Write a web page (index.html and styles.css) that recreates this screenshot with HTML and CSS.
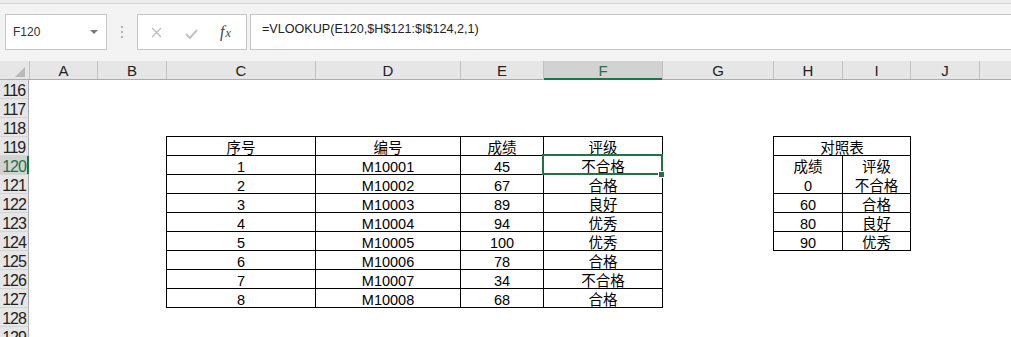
FILE: index.html
```html
<!DOCTYPE html>
<html>
<head>
  <meta charset="utf-8">
  <title>VLOOKUP 评级</title>
  <link rel="stylesheet" href="styles.css">
</head>
<body>
  <div class="topline"></div>

  <div class="formula-bar">
    <div class="name-box"><span>F120</span><span class="drop"></span></div>
    <div class="grip"><i></i><i></i><i></i></div>
    <div class="fx-box">
      <svg class="x-icon" width="11" height="11" viewBox="0 0 11 11"><path d="M1 1L10 10M10 1L1 10" stroke="#bdbdbd" stroke-width="1.3" fill="none"/></svg>
      <svg class="check-icon" width="13" height="10" viewBox="0 0 13 10"><path d="M1 5L5 9L12 1" stroke="#c2c2c2" stroke-width="2" fill="none"/></svg>
      <span class="fx">f<small>x</small></span>
    </div>
    <div class="formula-input">=VLOOKUP(E120,$H$121:$I$124,2,1)</div>
  </div>

  <div class="sheet">
    <div class="row col-head">
      <div class="corner"></div>
      <div>A</div><div>B</div><div>C</div><div>D</div><div>E</div>
      <div class="on">F</div>
      <div>G</div><div>H</div><div>I</div><div>J</div><div></div>
    </div>

    <div class="row first"><div class="rh">116</div></div>
    <div class="row"><div class="rh">117</div></div>
    <div class="row"><div class="rh">118</div></div>

    <div class="row">
      <div class="rh">119</div>
      <div class="c b at-c">序号</div><div class="c b">编号</div><div class="c b">成绩</div><div class="c b br">评级</div>
      <div class="c b br span-hi">对照表</div>
    </div>
    <div class="row">
      <div class="rh on">120</div>
      <div class="c b at-c">1</div><div class="c b">M10001</div><div class="c b">45</div><div class="c b br sel">不合格</div>
      <div class="c b at-h">成绩</div><div class="c b br">评级</div>
    </div>
    <div class="row">
      <div class="rh">121</div>
      <div class="c b at-c">2</div><div class="c b">M10002</div><div class="c b">67</div><div class="c b br">合格</div>
      <div class="c bl at-h">0</div><div class="c bl br">不合格</div>
    </div>
    <div class="row">
      <div class="rh">122</div>
      <div class="c b at-c">3</div><div class="c b">M10003</div><div class="c b">89</div><div class="c b br">良好</div>
      <div class="c b at-h">60</div><div class="c b br">合格</div>
    </div>
    <div class="row">
      <div class="rh">123</div>
      <div class="c b at-c">4</div><div class="c b">M10004</div><div class="c b">94</div><div class="c b br">优秀</div>
      <div class="c b at-h">80</div><div class="c b br">良好</div>
    </div>
    <div class="row">
      <div class="rh">124</div>
      <div class="c b at-c">5</div><div class="c b">M10005</div><div class="c b">100</div><div class="c b br">优秀</div>
      <div class="c b bb at-h">90</div><div class="c b br bb">优秀</div>
    </div>
    <div class="row">
      <div class="rh">125</div>
      <div class="c b at-c">6</div><div class="c b">M10006</div><div class="c b">78</div><div class="c b br">合格</div>
    </div>
    <div class="row">
      <div class="rh">126</div>
      <div class="c b at-c">7</div><div class="c b">M10007</div><div class="c b">34</div><div class="c b br">不合格</div>
    </div>
    <div class="row">
      <div class="rh">127</div>
      <div class="c b bb at-c">8</div><div class="c b bb">M10008</div><div class="c b bb">68</div><div class="c b br bb">合格</div>
    </div>
    <div class="row"><div class="rh">128</div></div>
    <div class="row"><div class="rh">129</div></div>
  </div>
</body>
</html>
```

FILE: styles.css
```css
body {
  margin: 0;
  font-family: "Liberation Sans", "Noto Sans CJK SC", sans-serif;
  background-color: #fff;
  overflow: hidden;
}

/* thin strip above the formula bar */
.topline {
  height: 3px;
  background-color: #ececec;
  border-bottom: 1px solid #d4d4d4;
}

.formula-bar {
  display: flex;
  height: 36px;
  padding: 10px 0 11px 5px;
  background-color: #f3f3f3;
}

.name-box {
  width: 102px;
  box-sizing: border-box;
  border: 1px solid #c6c6c6;
  background-color: #fff;
  display: flex;
  align-items: center;
  justify-content: space-between;
  padding: 0 8px 0 7px;
  font-size: 12px;
  line-height: 14px;
  color: #333;
}
.drop {
  width: 0;
  height: 0;
  border-left: 4px solid transparent;
  border-right: 4px solid transparent;
  border-top: 4px solid #7a7a7a;
}

.grip {
  display: flex;
  flex-direction: column;
  justify-content: center;
  gap: 3px;
  margin: 0 14px;
}
.grip i {
  display: block;
  width: 2px;
  height: 2px;
  background-color: #b3b3b3;
}

.fx-box {
  width: 110px;
  box-sizing: border-box;
  border: 1px solid #c6c6c6;
  background-color: #fff;
  display: flex;
  align-items: center;
  padding-left: 13px;
}
.check-icon {
  margin-left: 23px;
  margin-top: 3px;
}
.fx {
  margin-left: 22px;
  font-family: "Liberation Serif", serif;
  font-style: italic;
  font-size: 16px;
  color: #444;
}
.fx small {
  font-size: 12px;
  margin-left: 1px;
}

.formula-input {
  flex: 1;
  margin-left: 3px;
  margin-right: -2px;
  border: 1px solid #c6c6c6;
  background-color: #fff;
  padding: 6px 0 0 11px;
  font-size: 12.6px;
  line-height: 16px;
  color: #222;
}

/* grid */
.row {
  display: grid;
  grid-template-columns: 29px 68px 69px 149px 145px 83px 119px 111px 69px 68px 69px 32px;
  grid-template-rows: 19px;
}
.row.first {
  grid-template-rows: 18px;
}

.col-head {
  grid-template-rows: 18px;
  background-color: #e6e6e6;
  border-bottom: 1px solid #ababab;
}
.col-head div {
  border-left: 1px solid #c2c2c2;
  text-align: center;
  font-size: 15px;
  line-height: 16px;
  padding-top: 2px;
  color: #222;
}
.col-head .corner {
  border-left: none;
  position: relative;
}
.col-head .corner::after {
  content: "";
  position: absolute;
  right: 4px;
  bottom: 2px;
  border-left: 10px solid transparent;
  border-bottom: 10px solid #b8b8b8;
}
.col-head .on {
  background-color: #d2d2d2;
  color: #217346;
  margin-bottom: -1px;
  box-shadow: inset 0 -2px 0 #217346;
}

.rh {
  background-color: #e6e6e6;
  border-right: 1px solid #ababab;
  border-top: 1px solid #d4d4d4;
  text-align: center;
  font-size: 16px;
  line-height: 16px;
  letter-spacing: -1px;
  padding-top: 3px;
  color: #222;
}
.first .rh {
  border-top: none;
}
.rh.on {
  background-color: #d2d2d2;
  color: #217346;
  border-right-color: #217346;
  box-shadow: inset -1px 0 0 #217346;
}

/* cells */
.c {
  text-align: center;
  font-size: 14.5px;
  line-height: 16px;
  padding-top: 4px;
  color: #000;
  white-space: nowrap;
  min-width: 0;
}
.at-c { grid-column: 4; }
.at-h { grid-column: 9; }
.span-hi { grid-column: 9 / span 2; }

.b {
  border-left: 1px solid #000;
  border-top: 1px solid #000;
  padding-top: 3px;
}
.bl {
  border-left: 1px solid #000;
}
.br {
  box-shadow: 1px 0 0 #000;
}
.bb {
  box-shadow: 0 1px 0 #000;
}
.br.bb {
  box-shadow: 1px 0 0 #000, 0 1px 0 #000, 1px 1px 0 #000;
}

/* active cell F120 */
.sel {
  position: relative;
}
.sel::after {
  content: "";
  position: absolute;
  left: -2px;
  top: -2px;
  right: -1px;
  bottom: -1px;
  border: 2px solid #217346;
}
.sel::before {
  content: "";
  position: absolute;
  right: -3px;
  bottom: -4px;
  width: 5px;
  height: 5px;
  background-color: #217346;
  border: 1px solid #fff;
  z-index: 2;
}
```
